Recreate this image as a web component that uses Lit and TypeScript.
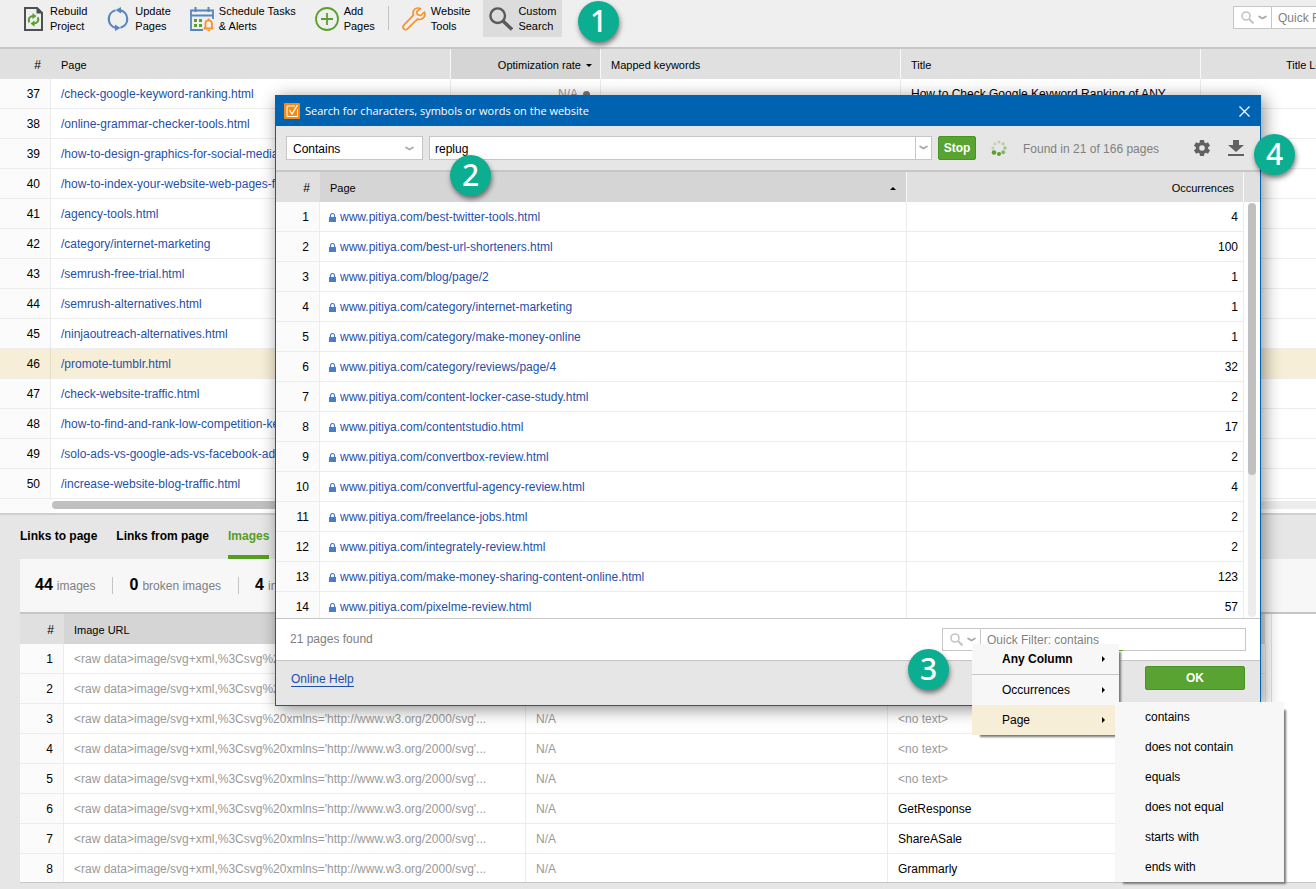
import { LitElement, html, svg, css, nothing } from "lit";
import { customElement, state } from "lit/decorators.js";
import { classMap } from "lit/directives/class-map.js";

const sitePages: [number, string][] = [
  [37, "/check-google-keyword-ranking.html"],
  [38, "/online-grammar-checker-tools.html"],
  [39, "/how-to-design-graphics-for-social-media.html"],
  [40, "/how-to-index-your-website-web-pages-faster.html"],
  [41, "/agency-tools.html"],
  [42, "/category/internet-marketing"],
  [43, "/semrush-free-trial.html"],
  [44, "/semrush-alternatives.html"],
  [45, "/ninjaoutreach-alternatives.html"],
  [46, "/promote-tumblr.html"],
  [47, "/check-website-traffic.html"],
  [48, "/how-to-find-and-rank-low-competition-keywords.html"],
  [49, "/solo-ads-vs-google-ads-vs-facebook-ads.html"],
  [50, "/increase-website-blog-traffic.html"],
];

const results: [string, number][] = [
  ["best-twitter-tools.html", 4],
  ["best-url-shorteners.html", 100],
  ["blog/page/2", 1],
  ["category/internet-marketing", 1],
  ["category/make-money-online", 1],
  ["category/reviews/page/4", 32],
  ["content-locker-case-study.html", 2],
  ["contentstudio.html", 17],
  ["convertbox-review.html", 2],
  ["convertful-agency-review.html", 4],
  ["freelance-jobs.html", 2],
  ["integrately-review.html", 2],
  ["make-money-sharing-content-online.html", 123],
  ["pixelme-review.html", 57],
];

const imageTexts = ["", "", "", "", "", "GetResponse", "ShareASale", "Grammarly"];
const imageUrl = "<raw data>image/svg+xml,%3Csvg%20xmlns='http://www.w3.org/2000/svg'...";
const conditions = ["contains", "does not contain", "equals", "does not equal", "starts with", "ends with"];

const icon = (body: unknown, size = 24) =>
  html`<svg width=${size} height=${size} viewBox="0 0 ${size} ${size}" aria-hidden="true">${body}</svg>`;

const rebuildIcon = icon(svg`
  <path d="M4 1h12l5 5v17H4z" fill="none" stroke="#4f5052" stroke-width="2"/>
  <path d="M15.500 0v6.500H22V6l-6-6z" fill="#4f5052"/>
  <path d="M8.300 15.500c-1.600-3.400.3-6.200 3.700-6.400M16.700 10.200c1.600 3.300-.3 6.200-3.700 6.400" fill="none" stroke="#5aa02c" stroke-width="2"/>
  <path d="M11.500 5.900l4 3.200-4 3.200zM13.500 13.400l-4 3.200 4 3.200z" fill="#5aa02c"/>`);
const updateIcon = icon(svg`
  <path d="M9.500 3.200A9.100 9.100 0 0 0 10 20.900M14.500 20.800A9.100 9.100 0 0 0 14 3.100" fill="none" stroke="#5786bf" stroke-width="2.200"/>
  <path d="M15 0v6.500L9.500 3.100zM9 17.500V24l5.500-3.100z" fill="#5786bf"/>`);
const scheduleIcon = icon(svg`
  <path d="M13 23H1V3.500h22V12" fill="none" stroke="#5786bf" stroke-width="1.800"/>
  <path d="M1 8.500h22" stroke="#5786bf" stroke-width="2"/>
  <path d="M5.500 0v5M18.500 0v5" stroke="#5786bf" stroke-width="2"/>
  <path d="M4 12h3v3H4zM9 12h3v3H9zM4 17h3v3H4zM9 17h3v3H9z" fill="#5aa02c"/>
  <path d="M13.500 21.500h10M15.500 21v-4.500a3.200 3.200 0 0 1 6.400 0V21" fill="#efefef" stroke="#fb9224" stroke-width="1.800"/>
  <path d="M17.200 23h3v1h-3zM17.700 11.500h2v2h-2z" fill="#fb9224"/>`);
const addIcon = icon(svg`
  <circle cx="12" cy="12" r="11" fill="none" stroke="#5aa02c" stroke-width="1.800"/>
  <path d="M12 6v12M6 12h12" stroke="#5aa02c" stroke-width="1.800"/>`);
const wrenchIcon = icon(svg`
  <path d="M18.500 1.500c-2.700-1.200-6-.2-7 2.400-.6 1.500-.5 2.900 0 4.300L1.800 18.200c-1 1.100-1 2.600 0 3.600s2.500 1 3.600 0l10-9.700c1.600.6 3.200.5 4.700-.3 2.500-1.400 3.300-4.300 2.300-6.800l-3.700 3.500-3.200-.8-.7-3z" fill="none" stroke="#fb9224" stroke-width="1.700" stroke-linejoin="round"/>`);
const searchIcon = icon(svg`
  <circle cx="8.700" cy="8.700" r="7.300" fill="none" stroke="#5a5a5a" stroke-width="2.400"/>
  <path d="M14 14l9 8.500" stroke="#5a5a5a" stroke-width="3.400"/>`);
const smallSearch = icon(svg`
  <circle cx="5" cy="5" r="4" fill="none" stroke="#c4c4c4" stroke-width="1.600"/>
  <path d="M8 8l4.500 4.500" stroke="#c4c4c4" stroke-width="2"/>`, 13);
const chevron = html`<svg width="9" height="6" viewBox="0 0 9 6" aria-hidden="true"><path d="M1.200 1.500l3.300 2 3.300-2" fill="none" stroke="#ababab" stroke-width="2" stroke-linecap="round" stroke-linejoin="round"/></svg>`;
const lockIcon = html`<svg width="7" height="10" viewBox="0 0 7 10" aria-hidden="true"><path d="M1.500 4V2.500a2 2 0 0 1 4 0V4" fill="none" stroke="#4a7cc7" stroke-width="1.200"/><path d="M0 4h7v5H0z" fill="#4a7cc7"/></svg>`;
const gearIcon = icon(svg`
  <path fill="#616161" fill-rule="evenodd" d="M6 0h4l.4 2.400 1.400.8 2.200-.9 2 3.400-1.900 1.500v1.600l1.900 1.500-2 3.400-2.200-.9-1.400.8L10 16H6l-.4-2.400-1.400-.8-2.200.9-2-3.400 1.900-1.500V7.200L0 5.700l2-3.400 2.200.9 1.400-.8zM8 5.200a2.800 2.800 0 1 0 0 5.600 2.800 2.800 0 0 0 0-5.600z"/>`, 16);
const downloadIcon = icon(svg`
  <path fill="#616161" d="M5 0h6v5h5l-8 7-8-7h5zM0 14h16v2H0z"/>`, 16);
const checkIcon = icon(svg`
  <rect width="16" height="16" rx="1" fill="#f88a12"/>
  <path d="M11 3H3v10.500h10.500V6" fill="none" stroke="#fff" stroke-width="1"/>
  <path d="M5.500 7l2.500 4 5.500-9" fill="none" stroke="#fff" stroke-width="1.300"/>`, 16);
const closeIcon = icon(svg`<path d="M.5.500l10 10M10.500.500l-10 10" stroke="#fff" stroke-width="1.300"/>`, 11);
const spinnerDots: [number, number, number, number][] = [
  [8, 2, 1.5, 0.3], [12.2, 3.8, 1.6, 0.35], [14, 8, 1.7, 0.5], [12.2, 12.2, 2, 0.7],
  [8, 14, 2, 1], [3, 12.5, 2.3, 1], [2, 8, 1.5, 0.3], [3.8, 3.8, 1.5, 0.25],
];
const spinner = icon(spinnerDots.map(([x, y, r, o]) => svg`<circle cx=${x} cy=${y} r=${r} fill="#5aa02c" opacity=${o}/>`), 16);

@customElement("app-root")
export class AppRoot extends LitElement {
  @state() private selected = 46;
  @state() private query = "replug";

  static styles = css`
    :host {
      display: block;
      position: relative;
      height: 100vh;
      overflow: hidden;
      font: 12px/15px "Liberation Sans", Arial, sans-serif;
      color: #000;
      background: #e6e6e6;
    }
    * { box-sizing: border-box; }
    svg { display: block; flex: none; }
    button { font: inherit; color: inherit; border: 0; padding: 0; background: none; cursor: pointer; }
    a { color: #1f50a8; text-decoration: none; }
    input, select { font: inherit; color: inherit; border-radius: 0; outline: 0; margin: 0; }
    table { border-collapse: separate; border-spacing: 0; table-layout: fixed; width: 100%; }
    th { height: 30px; padding: 2px 10px 0; font-size: 11px; font-weight: 400; text-align: left; background: #e0e0e0; border-right: 1px solid #f8f8f8; white-space: nowrap; }
    td { height: 30px; padding: 2px 10px 0; border-right: 1px solid #ececec; border-bottom: 1px solid #ececec; white-space: nowrap; overflow: hidden; }
    th.sorted { background: #d5d5d5; }
    th.num { border-right-color: #e0e0e0; font-size: 12px; padding-right: 9px; }
    .num, .end { text-align: right; }
    td.num { background: #fbfbfb; }
    .muted { color: #999; }

    .app { display: flex; flex-direction: column; height: 100%; min-width: 1547px; }
    .toolbar { display: flex; align-items: flex-start; gap: 7px; height: 49px; padding: 0 10px 0 15px; background: #efefef; border-bottom: 2px solid #c6c6c6; }
    .tool { display: flex; align-items: center; gap: 5px; height: 37px; padding: 0 6px; font-size: 11px; text-align: left; white-space: pre; }
    .tool.active { background: #dcdcdc; }
    .rule { width: 1px; height: 24px; margin-top: 6px; background: #c4c4c4; }

    .filter { display: flex; position: relative; width: 304px; height: 23px; border: 1px solid #c6c6c6; background: #fff; }
    .filter button { display: flex; align-items: center; gap: 4px; width: 38px; padding: 0 0 0 7px; border-right: 1px solid #c6c6c6; }
    .filter input { flex: 1; min-width: 0; border: 0; padding: 2px 6px 0; background: none; }
    .filter input::placeholder { color: #808080; opacity: 1; }
    .toolbar .filter { margin: 6px 0 0 auto; }
    .filter.open::after { content: ""; position: absolute; left: 38px; right: 122px; bottom: -1px; height: 1px; background: #5aa02c; }

    .pages { background: #fff; }
    .pages .c-num { width: 51px; }
    .pages .c-page { width: 400px; }
    .pages .c-rate { width: 150px; }
    .pages .c-wide { width: 300px; }
    .pages .c-len { width: 153px; }
    .selected td, .selected td.num { background: #f6eed6; }
    .selected td { border-right-color: #e6dec4; }
    .down, .up { display: inline-block; border: 3px solid transparent; vertical-align: middle; margin-left: 5px; }
    .down { border-top-color: #000; border-bottom: 0; }
    .up { border-bottom-color: #000; border-top: 0; }
    .dot { display: inline-block; width: 7px; height: 7px; margin-left: 5px; border-radius: 50%; background: #777; }
    .pages .rate { padding-right: 8px; }
    .hscroll { display: flex; height: 14px; padding-top: 2px; }
    .gutter { width: 51px; margin: -2px 1px 0 0; background: #fbfbfb; }
    .track { flex: 1; height: 8px; background: #ececec; border-radius: 4px; }
    .thumb { background: #c0c0c0; border-radius: 4px; }
    .track .thumb { width: 500px; height: 8px; }

    .details { flex: 1; min-height: 0; display: flex; flex-direction: column; padding: 0 0 6px 20px; border-top: 2px solid #cfcfcf; }
    .tabs { display: flex; gap: 19px; height: 44px; }
    .tab { padding-top: 3px; font-weight: 700; border-bottom: 4px solid transparent; }
    .tab.active { color: #549f1f; border-bottom-color: #549f1f; }
    .stats { display: flex; align-items: center; height: 55px; padding: 0 15px; background: #f7f7f7; border-bottom: 2px solid #c6c6c6; color: #808080; }
    .stat { display: flex; align-items: baseline; gap: 4px; }
    .stat + .stat { margin-left: 17px; padding-left: 16px; border-left: 1px solid #c4c4c4; }
    .stat b { font-size: 16px; color: #000; }
    .images { flex: 1; min-height: 0; display: flex; background: #fff; border-bottom: 1px solid #c6c6c6; overflow: hidden; }
    .images table { width: 1246px; flex: none; align-self: flex-start; }
    .images .c-num { width: 44px; }
    .images .c-url { width: 462px; }
    .images .c-alt { width: 362px; }
    .edge { width: 1px; margin-left: 5px; background: #e4e4e4; }

    .dialog { position: absolute; top: 95px; left: 275px; right: 55px; display: flex; flex-direction: column; border: 1px solid #0063b1; background: #fff; box-shadow: 3px 3px 16px rgba(0, 0, 0, 0.45); }
    .titlebar { display: flex; align-items: center; gap: 5px; height: 30px; padding: 0 10px 0 8px; background: #0063b1; color: #fff; font: 11px/16px "Open Sans", "Noto Sans", sans-serif; }
    .titlebar h1 { flex: 1; margin: 0; font: inherit; }
    .search { display: flex; align-items: center; height: 46px; padding: 0 16px 0 10px; background: #e6e6e6; border-bottom: 2px solid #c6c6c6; }
    .field { height: 24px; border: 1px solid #c6c6c6; background: #fff; }
    .select { position: relative; width: 137px; margin-right: 6px; }
    .select select { display: block; width: 100%; padding: 2px 6px 0; appearance: none; }
    .select svg { position: absolute; right: 9px; top: 10px; pointer-events: none; }
    .query { flex: 1; min-width: 0; padding: 2px 5px 0; }
    .drop { display: flex; align-items: center; justify-content: center; width: 16px; height: 24px; margin-right: 6px; background: #fff; border: 1px solid #c6c6c6; border-left: 0; }
    .green { height: 24px; padding-top: 1px; border: 1px solid #4a9221; border-radius: 2px; background: #58a331; color: #fff; font-weight: 700; }
    .stop { width: 38px; margin-right: 15px; }
    .status { width: 171px; margin-left: 16px; padding-top: 2px; color: #808080; }
    .search .tail { margin-left: 18px; }

    .results { display: flex; max-height: 446px; overflow: hidden; }
    .results .c-num { width: 44px; }
    .results .c-page { width: 587px; }
    .results table { flex: 1; align-self: flex-start; }
    .results td.count { text-align: right; padding-right: 5px; }
    .results th.count { text-align: right; padding-right: 9px; }
    .results .page { padding-left: 9px; }
    .link { display: flex; align-items: center; gap: 4px; }
    .between { display: flex; align-items: center; justify-content: space-between; }
    .vscroll { display: flex; flex-direction: column; align-items: center; width: 16px; }
    .corner { width: 100%; height: 30px; background: #e0e0e0; }
    .vtrack { flex: 1; width: 8px; margin: 1px 0; background: #ececec; border-radius: 4px; }
    .vtrack .thumb { width: 8px; height: 272px; }
    .found { display: flex; align-items: center; justify-content: space-between; height: 43px; padding: 0 14px; border: 1px solid #c6c6c6; border-width: 1px 0; color: #808080; }
    .actions { display: flex; align-items: flex-start; justify-content: space-between; height: 44px; padding: 5px 15px; background: #e6e6e6; }
    .actions a { margin-top: 6px; line-height: 14px; border-bottom: 1px solid #1f50a8; }
    .ok { width: 100px; }

    .menu { position: absolute; margin: 0; padding: 0; list-style: none; background: #f7f7f7; box-shadow: 5px 5px 2px -3px #777; }
    .menu button { display: flex; align-items: center; justify-content: space-between; width: 100%; height: 30px; padding: 0 14px 0 30px; }
    .columns { top: 644px; left: 972px; width: 147px; }
    .columns .any { font-weight: 700; border-bottom: 1px solid #c6c6c6; height: 31px; }
    .columns .current { background: #f6eed6; }
    .right { border: 3px solid transparent; border-left-color: #000; border-right: 0; }
    .conditions { top: 702px; left: 1115px; width: 169px; }

    .badge { position: absolute; display: flex; align-items: center; justify-content: center; width: 41px; height: 41px; padding-bottom: 2px; border-radius: 50%; background: #0cae91; color: #fff; font: 500 30px/39px "Noto Sans", "Open Sans", sans-serif; box-shadow: 1px 3px 5px rgba(0, 0, 0, 0.5); }
    .one { left: 578px; top: 1px; }
    .two { left: 450px; top: 155px; }
    .three { left: 908px; top: 649px; }
    .four { left: 1254px; top: 134px; }
  `;

  private tool(glyph: unknown, label: string, active = false) {
    return html`<button class=${classMap({ tool: true, active })}>${glyph}<span>${label}</span></button>`;
  }

  private filter(placeholder: string, open = false) {
    return html`<div class=${classMap({ filter: true, open })}>
      <button aria-label="Filter options">${smallSearch}${chevron}</button>
      <input type="text" aria-label="Quick Filter" placeholder=${placeholder} />
    </div>`;
  }

  private pagesTable() {
    return html`<section class="pages">
      <table>
        <colgroup><col class="c-num" /><col class="c-page" /><col class="c-rate" /><col class="c-wide" /><col class="c-wide" /><col class="c-len" /><col /></colgroup>
        <thead>
          <tr>
            <th class="num">#</th><th>Page</th>
            <th class="sorted end rate">Optimization rate<i class="down"></i></th>
            <th>Mapped keywords</th><th>Title</th><th class="end">Title Length</th><th></th>
          </tr>
        </thead>
        <tbody>
          ${sitePages.map(([n, path]) => html`<tr class=${classMap({ selected: n === this.selected })} @click=${() => (this.selected = n)}>
            <td class="num">${n}</td>
            <td><a href="#">${path}</a></td>
            <td class="end muted">${n === 37 ? html`N/A<i class="dot"></i>` : nothing}</td>
            <td></td>
            <td>${n === 37 ? "How to Check Google Keyword Ranking of ANY" : nothing}</td>
            <td></td><td></td>
          </tr>`)}
        </tbody>
      </table>
      <div class="hscroll"><div class="gutter"></div><div class="track"><div class="thumb"></div></div></div>
    </section>`;
  }

  private detailsPanel() {
    return html`<section class="details">
      <nav class="tabs">
        <button class="tab">Links to page</button>
        <button class="tab">Links from page</button>
        <button class="tab active">Images</button>
      </nav>
      <div class="stats">
        <span class="stat"><b>44</b> images</span>
        <span class="stat"><b>0</b> broken images</span>
        <span class="stat"><b>4</b> in</span>
      </div>
      <div class="images">
        <table>
          <colgroup><col class="c-num" /><col class="c-url" /><col class="c-alt" /><col /></colgroup>
          <thead><tr><th class="num">#</th><th class="sorted">Image URL</th><th></th><th></th></tr></thead>
          <tbody>
            ${imageTexts.map((text, i) => html`<tr>
              <td class="num">${i + 1}</td><td class="muted">${imageUrl}</td><td class="muted">N/A</td>
              <td class=${classMap({ muted: !text })}>${text || "<no text>"}</td>
            </tr>`)}
          </tbody>
        </table>
        <div class="edge"></div>
      </div>
    </section>`;
  }

  private dialog() {
    return html`<section class="dialog" role="dialog" aria-labelledby="dialog-title">
      <header class="titlebar">
        ${checkIcon}
        <h1 id="dialog-title">Search for characters, symbols or words on the website</h1>
        <button aria-label="Close">${closeIcon}</button>
      </header>
      <div class="search">
        <div class="select">
          <select class="field" aria-label="Condition"><option>Contains</option><option>Does not contain</option></select>
          ${chevron}
        </div>
        <input class="field query" type="text" aria-label="Search text" .value=${this.query}
          @input=${(e: Event) => (this.query = (e.target as HTMLInputElement).value)} />
        <button class="drop" aria-label="Recent searches">${chevron}</button>
        <button class="green stop">Stop</button>
        ${spinner}
        <span class="status">Found in 21 of 166 pages</span>
        <button aria-label="Settings">${gearIcon}</button>
        <button class="tail" aria-label="Download">${downloadIcon}</button>
      </div>
      <div class="results">
        <table>
          <colgroup><col class="c-num" /><col class="c-page" /><col /></colgroup>
          <thead><tr>
            <th class="num">#</th>
            <th class="sorted"><div class="between">Page<i class="up"></i></div></th>
            <th class="count">Occurrences</th>
          </tr></thead>
          <tbody>
            ${results.map(([path, count], i) => html`<tr>
              <td class="num">${i + 1}</td>
              <td class="page"><a class="link" href="#">${lockIcon}www.pitiya.com/${path}</a></td>
              <td class="count">${count}</td>
            </tr>`)}
          </tbody>
        </table>
        <div class="vscroll"><div class="corner"></div><div class="vtrack"><div class="thumb"></div></div></div>
      </div>
      <div class="found"><span>21 pages found</span>${this.filter("Quick Filter: contains", true)}</div>
      <footer class="actions"><a href="#">Online Help</a><button class="green ok">OK</button></footer>
    </section>`;
  }

  render() {
    return html`
      <div class="app">
        <header class="toolbar">
          ${this.tool(rebuildIcon, "Rebuild\nProject")}
          ${this.tool(updateIcon, "Update\nPages")}
          ${this.tool(scheduleIcon, "Schedule Tasks\n& Alerts")}
          ${this.tool(addIcon, "Add\nPages")}
          <div class="rule"></div>
          ${this.tool(wrenchIcon, "Website\nTools")}
          ${this.tool(searchIcon, "Custom\nSearch", true)}
          ${this.filter("Quick Filter: contains")}
        </header>
        ${this.pagesTable()}
        ${this.detailsPanel()}
      </div>
      ${this.dialog()}
      <ul class="menu columns">
        <li><button class="any">Any Column<i class="right"></i></button></li>
        <li><button>Occurrences<i class="right"></i></button></li>
        <li><button class="current">Page<i class="right"></i></button></li>
      </ul>
      <ul class="menu conditions">${conditions.map((c) => html`<li><button>${c}</button></li>`)}</ul>
      <span class="badge one">1</span>
      <span class="badge two">2</span>
      <span class="badge three">3</span>
      <span class="badge four">4</span>
    `;
  }
}
